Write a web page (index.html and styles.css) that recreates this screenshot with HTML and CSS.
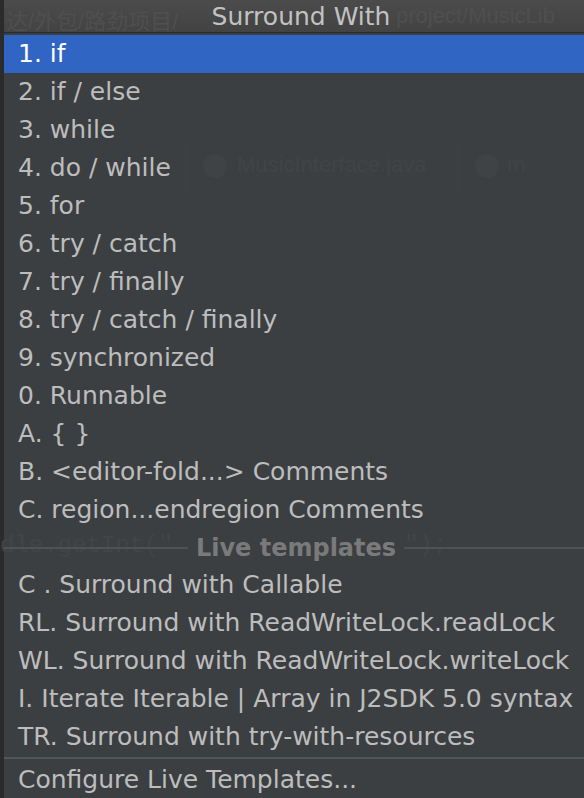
FILE: index.html
```html
<!DOCTYPE html>
<html>
<head>
<meta charset="utf-8">
<link rel="stylesheet" href="styles.css">
</head>
<body>
<div class="popup">
  <div class="title">
    <span class="ghost ghost-path-left">达/外包/路劲项目/</span>
    <span class="title-text">Surround With</span>
    <span class="ghost ghost-path-right">project/MusicLib</span>
  </div>
  <div class="ghost-tabs">
    <span class="ghost-sep s1"></span>
    <span class="ghost-dot d1"></span>
    <span class="ghost-tab-label">MusicInterface.java</span>
    <span class="ghost-sep s2"></span>
    <span class="ghost-dot d2"></span>
    <span class="ghost-tab-label l2">m</span>
  </div>
  <div class="ghost-code">dle.getInt("</div>
  <div class="ghost-code c2">");</div>
  <ul class="list">
    <li class="item selected">1. if</li>
    <li class="item">2. if / else</li>
    <li class="item">3. while</li>
    <li class="item">4. do / while</li>
    <li class="item">5. for</li>
    <li class="item">6. try / catch</li>
    <li class="item">7. try / finally</li>
    <li class="item">8. try / catch / finally</li>
    <li class="item">9. synchronized</li>
    <li class="item">0. Runnable</li>
    <li class="item">A. { }</li>
    <li class="item">B. &lt;editor-fold...&gt; Comments</li>
    <li class="item">C. region...endregion Comments</li>
  </ul>
  <div class="group-header"><span class="group-line"></span><span class="group-label">Live templates</span><span class="group-line"></span></div>
  <ul class="list">
    <li class="item">C . Surround with Callable</li>
    <li class="item">RL. Surround with ReadWriteLock.readLock</li>
    <li class="item">WL. Surround with ReadWriteLock.writeLock</li>
    <li class="item">I. Iterate Iterable | Array in J2SDK 5.0 syntax</li>
    <li class="item">TR. Surround with try-with-resources</li>
  </ul>
  <div class="separator"></div>
  <div class="item configure">Configure Live Templates...</div>
</div>
</body>
</html>
```
FILE: styles.css
```css
html, body {
  margin: 0;
  padding: 0;
  width: 584px;
  height: 798px;
  overflow: hidden;
  background: #2b2b2b;
}
.popup {
  position: relative;
  margin-left: 4px;
  width: 594px;
  height: 798px;
  background: #3c3f41;
  font-family: "DejaVu Sans", "Noto Sans CJK SC", sans-serif;
  font-size: 25px;
  color: #bdbdbd;
}
.title {
  position: relative;
  height: 32px;
  border-bottom: 1px solid #2a2a2a;
  background: linear-gradient(#4b4b4b, #434343);
  display: flex;
  align-items: center;
  justify-content: center;
  overflow: hidden;
}
.title-text {
  position: relative;
  z-index: 1;
  color: #c2c2c2;
  font-size: 25px;
}
.ghost {
  position: absolute;
  top: 3px;
  color: #4f4f4f;
  font-size: 22px;
  font-family: "Liberation Sans", "Noto Sans CJK SC", sans-serif;
}
.ghost-path-left { left: 2px; }
.ghost-path-right { left: 392px; }
.list {
  list-style: none;
  margin: 0;
  padding: 0;
  position: relative;
}
.list:first-of-type { padding-top: 2px; }
.item {
  height: 38px;
  line-height: 38px;
  padding-left: 14px;
  white-space: nowrap;
  position: relative;
}
.selected {
  background: #3165c4;
  color: #ffffff;
}
.group-header {
  height: 37px;
  display: flex;
  align-items: center;
  gap: 8px;
  position: relative;
}
.group-line {
  flex: 1;
  height: 2px;
  background: #4e5254;
}
.group-line:last-child { margin-right: 10px; }
.group-label {
  font-weight: bold;
  color: #7a7a7a;
  font-size: 24px;
}
.separator {
  height: 4px;
  box-sizing: border-box;
  border-top: 2px solid #515658;
  margin-top: 1px;
}
.configure { height: 37px; line-height: 37px; }
.ghost-tabs {
  position: absolute;
  top: 145px;
  left: 0;
  width: 594px;
  height: 46px;
}
.ghost-sep {
  position: absolute;
  top: 0;
  width: 2px;
  height: 46px;
  background: #3e4143;
}
.s1 { left: 181px; }
.s2 { left: 453px; }
.ghost-dot {
  position: absolute;
  top: 9px;
  width: 24px;
  height: 24px;
  border-radius: 50%;
  background: #404345;
}
.d1 { left: 199px; }
.d2 { left: 471px; }
.ghost-tab-label {
  position: absolute;
  left: 233px;
  top: 7px;
  font-family: "Liberation Sans", sans-serif;
  font-size: 22px;
  color: #414446;
}
.l2 { left: 503px; }
.ghost-code {
  position: absolute;
  top: 532px;
  left: -4px;
  font-family: "Liberation Mono", monospace;
  font-size: 24px;
  color: #424547;
}
.c2 { left: 400px; }
```
